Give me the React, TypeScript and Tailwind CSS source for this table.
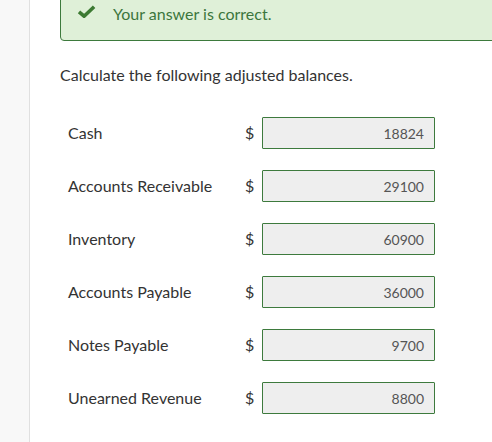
const rows = [
  { label: "Cash", value: "18824" },
  { label: "Accounts Receivable", value: "29100" },
  { label: "Inventory", value: "60900" },
  { label: "Accounts Payable", value: "36000" },
  { label: "Notes Payable", value: "9700" },
  { label: "Unearned Revenue", value: "8800" },
]

export default function App() {
  return (
    <div
      className="flex h-[442px] w-[492px] overflow-hidden bg-white text-[#333]"
      style={{ fontFamily: "Lato, 'Open Sans', sans-serif" }}
    >
      {/* Left rail */}
      <div className="w-[30px] shrink-0 border-r border-[#e0e0e0] bg-[#f8f8f8]" />

      <div className="flex-1 pl-[30px]">
        {/* Feedback */}
        <div className="-mt-[12px] flex h-[53px] w-[470px] items-center rounded-[4px] border border-[#3d7a3d] bg-[#dff0d8] pb-[2px]">
          <svg viewBox="0 0 18 13" className="ml-[16px] mb-[4px] h-[13px] w-[19px]" aria-hidden="true">
            <path d="M1.5 6.8 L6.6 11.2 L16.6 1.8" fill="none" stroke="#3c7a32" strokeWidth="3.6" />
          </svg>
          <span className="ml-[17px] text-[16px] text-[#3c763d]">Your answer is correct.</span>
        </div>

        <p className="mt-[22px] text-[16px]">Calculate the following adjusted balances.</p>

        <div className="mt-[30px] flex flex-col gap-[21px] pl-[8px]">
          {rows.map((r) => (
            <div key={r.label} className="flex h-[32px] items-center">
              <span className="w-[177px] text-[16px]">{r.label}</span>
              <span className="w-[17px] text-[16px]">$</span>
              <div className="flex h-[32px] w-[173px] items-center justify-end rounded-[1px] border border-[#3d7a3d] bg-[#eeeeee] pr-[10px] text-[14px] text-[#555]">
                {r.value}
              </div>
            </div>
          ))}
        </div>
      </div>
    </div>
  )
}
